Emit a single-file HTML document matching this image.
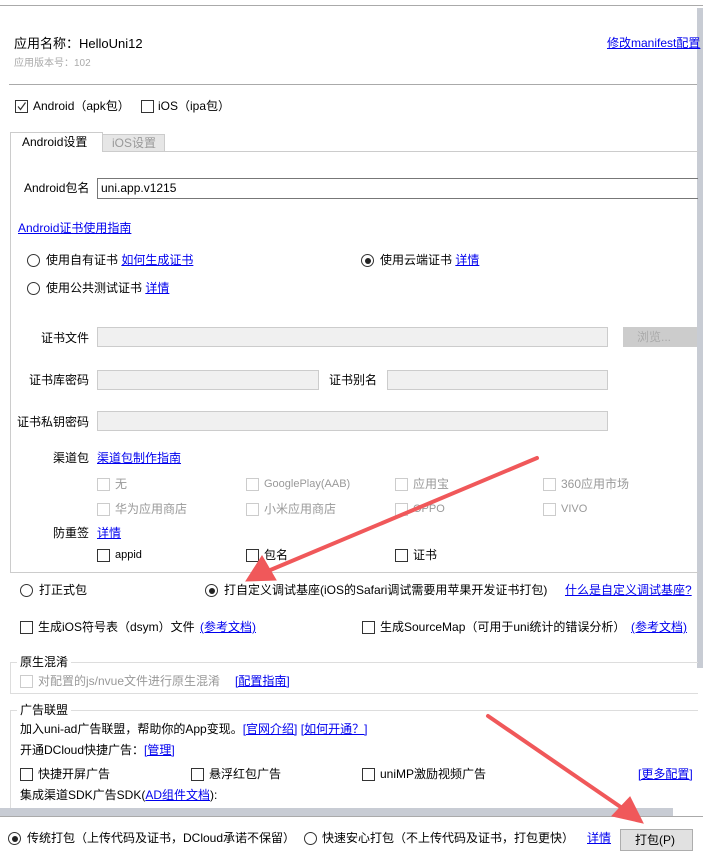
<!DOCTYPE html>
<html><head><meta charset="utf-8"><style>
body{margin:0;width:703px;height:860px;background:#fff;position:relative;overflow:hidden;font-family:"Liberation Sans","Noto Sans CJK SC",sans-serif;font-size:12px;color:#000}
.a{position:absolute;white-space:nowrap;line-height:14px}
.l{color:#0000ee;text-decoration:underline}
.g{color:#999}
.cb{position:absolute;width:11px;height:11px;border:1px solid #333;background:#fff}
.cb.d{border-color:#ccc}
.rd{position:absolute;width:11px;height:11px;border:1px solid #333;border-radius:50%;background:#fff}
.rd.on:after{content:"";position:absolute;left:2.5px;top:2.5px;width:6px;height:6px;border-radius:50%;background:#222}
.in{position:absolute;height:18px;border:1px solid #ccc;background:#f0f0f0}
.lab{position:absolute;text-align:right;width:80px;white-space:nowrap;line-height:14px}
</style></head><body>
<div style="position:absolute;left:0;top:5px;width:703px;height:1px;background:#aaa"></div>
<div style="position:absolute;left:697px;top:8px;width:6px;height:660px;background:#c8ccd4"></div>
<div class="a" style="left:14px;top:37px;font-size:13px">应用名称：HelloUni12</div>
<div class="a g" style="left:14px;top:57px;font-size:10px;color:#aaa">应用版本号：102</div>
<div class="a l" style="left:607px;top:36px">修改manifest配置</div>
<div style="position:absolute;left:9px;top:84px;width:688px;height:1px;background:#aaa"></div>
<div class="cb" style="left:15px;top:100px"></div>
<svg style="position:absolute;left:16px;top:101px" width="11" height="11"><path d="M2 5.5 L4.5 8.5 L9.5 1.5" stroke="#333" stroke-width="1.2" fill="none"/></svg>
<div class="a" style="left:33px;top:99px">Android（apk包）</div>
<div class="cb" style="left:141px;top:100px"></div>
<div class="a" style="left:158px;top:99px">iOS（ipa包）</div>
<div style="position:absolute;left:102px;top:134px;width:61px;height:17px;background:#e6e6e6;border:1px solid #ccc;border-bottom:none"></div>
<div class="a g" style="left:112px;top:136px">iOS设置</div>
<div style="position:absolute;left:10px;top:132px;width:91px;height:19px;border:1px solid #ccc;border-bottom:none;background:#fff;z-index:2"></div>
<div class="a" style="left:22px;top:135px;z-index:3">Android设置</div>
<div style="position:absolute;left:10px;top:151px;width:687px;height:420px;border-left:1px solid #ccc;border-top:1px solid #ccc;border-bottom:1px solid #ccc"></div>
<div class="a" style="left:24px;top:181px">Android包名</div>
<div style="position:absolute;left:97px;top:178px;width:600px;height:19px;border:1px solid #777;border-right:none"></div>
<div class="a" style="left:101px;top:181px">uni.app.v1215</div>
<div class="a l" style="left:18px;top:221px">Android证书使用指南</div>
<div class="rd" style="left:27px;top:254px"></div><div class="a" style="left:46px;top:253px">使用自有证书 <span class="l">如何生成证书</span></div>
<div class="rd on" style="left:361px;top:254px"></div><div class="a" style="left:380px;top:253px">使用云端证书 <span class="l">详情</span></div>
<div class="rd" style="left:27px;top:282px"></div><div class="a" style="left:46px;top:281px">使用公共测试证书 <span class="l">详情</span></div>
<div class="lab" style="left:9px;top:331px">证书文件</div>
<div class="in" style="left:97px;top:327px;width:509px"></div>
<div style="position:absolute;left:623px;top:327px;width:74px;height:20px;background:#ccc"></div>
<div class="a" style="left:637px;top:330px;color:#aaa">浏览...</div>
<div class="lab" style="left:9px;top:373px">证书库密码</div>
<div class="in" style="left:97px;top:370px;width:220px"></div>
<div class="a" style="left:329px;top:373px">证书别名</div>
<div class="in" style="left:387px;top:370px;width:219px"></div>
<div class="lab" style="left:9px;top:415px">证书私钥密码</div>
<div class="in" style="left:97px;top:411px;width:509px"></div>
<div class="lab" style="left:9px;top:451px">渠道包</div><div class="a l" style="left:97px;top:451px">渠道包制作指南</div>
<div class="cb d" style="left:97px;top:478px"></div><div class="a g" style="left:115px;top:477px">无</div>
<div class="cb d" style="left:246px;top:478px"></div><div class="a g" style="left:264px;top:477px;font-size:11px">GooglePlay(AAB)</div>
<div class="cb d" style="left:395px;top:478px"></div><div class="a g" style="left:413px;top:477px">应用宝</div>
<div class="cb d" style="left:543px;top:478px"></div><div class="a g" style="left:561px;top:477px">360应用市场</div>
<div class="cb d" style="left:97px;top:503px"></div><div class="a g" style="left:115px;top:502px">华为应用商店</div>
<div class="cb d" style="left:246px;top:503px"></div><div class="a g" style="left:264px;top:502px">小米应用商店</div>
<div class="cb d" style="left:395px;top:503px"></div><div class="a g" style="left:413px;top:502px;font-size:11px">OPPO</div>
<div class="cb d" style="left:543px;top:503px"></div><div class="a g" style="left:561px;top:502px;font-size:11px">VIVO</div>
<div class="lab" style="left:9px;top:526px">防重签</div><div class="a l" style="left:97px;top:526px">详情</div>
<div class="cb" style="left:97px;top:549px"></div><div class="a" style="left:115px;top:548px;font-size:11px">appid</div>
<div class="cb" style="left:246px;top:549px"></div><div class="a" style="left:264px;top:548px">包名</div>
<div class="cb" style="left:395px;top:549px"></div><div class="a" style="left:413px;top:548px">证书</div>
<div class="rd" style="left:20px;top:584px"></div><div class="a" style="left:39px;top:583px">打正式包</div>
<div class="rd on" style="left:205px;top:584px"></div><div class="a" style="left:224px;top:583px">打自定义调试基座(iOS的Safari调试需要用苹果开发证书打包)</div>
<div class="a l" style="left:565px;top:583px">什么是自定义调试基座?</div>
<div class="cb" style="left:20px;top:621px"></div><div class="a" style="left:38px;top:620px">生成iOS符号表（dsym）文件</div><div class="a l" style="left:200px;top:620px">(参考文档)</div>
<div class="cb" style="left:362px;top:621px"></div><div class="a" style="left:380px;top:620px">生成SourceMap（可用于uni统计的错误分析）</div><div class="a l" style="left:631px;top:620px">(参考文档)</div>
<div style="position:absolute;left:10px;top:662px;width:687px;height:30px;border:1px solid #ddd;border-right:none"></div>
<div class="a" style="left:17px;top:655px;background:#fff;padding:0 3px">原生混淆</div>
<div class="cb d" style="left:20px;top:675px"></div><div class="a g" style="left:38px;top:674px">对配置的js/nvue文件进行原生混淆</div><div class="a l" style="left:235px;top:674px">[配置指南]</div>
<div style="position:absolute;left:10px;top:710px;width:687px;height:100px;border-left:1px solid #ddd;border-top:1px solid #ddd"></div>
<div class="a" style="left:17px;top:703px;background:#fff;padding:0 3px">广告联盟</div>
<div class="a" style="left:20px;top:722px">加入uni-ad广告联盟，帮助你的App变现。<span class="l">[官网介绍]</span> <span class="l">[如何开通？]</span></div>
<div class="a" style="left:20px;top:743px">开通DCloud快捷广告：<span class="l">[管理]</span></div>
<div class="cb" style="left:20px;top:768px"></div><div class="a" style="left:38px;top:767px">快捷开屏广告</div>
<div class="cb" style="left:191px;top:768px"></div><div class="a" style="left:209px;top:767px">悬浮红包广告</div>
<div class="cb" style="left:362px;top:768px"></div><div class="a" style="left:380px;top:767px">uniMP激励视频广告</div>
<div class="a l" style="left:638px;top:767px">[更多配置]</div>
<div class="a" style="left:20px;top:788px">集成渠道SDK广告SDK(<span class="l">AD组件文档</span>):</div>
<div style="position:absolute;left:0;top:808px;width:673px;height:8px;background:#c8ccd4"></div>
<div style="position:absolute;left:0;top:816px;width:703px;height:1px;background:#aaa"></div>
<div class="rd on" style="left:8px;top:832px"></div><div class="a" style="left:27px;top:831px">传统打包（上传代码及证书，DCloud承诺不保留）</div>
<div class="rd" style="left:304px;top:832px"></div><div class="a" style="left:322px;top:831px">快速安心打包（不上传代码及证书，打包更快）</div>
<div class="a l" style="left:587px;top:831px">详情</div>
<div style="position:absolute;left:620px;top:829px;width:71px;height:20px;background:#e1e1e1;border:1px solid #adadad"></div>
<div class="a" style="left:635px;top:833px">打包(P)</div>
<svg style="position:absolute;left:0;top:0" width="703" height="860">
<g fill="#f0585a" stroke="#f0585a" stroke-linecap="round">
<line x1="537" y1="458" x2="268" y2="571" stroke-width="4"/>
<polygon points="246,581 262,556 276,580" />
<line x1="488" y1="716" x2="625" y2="810" stroke-width="4"/>
<polygon points="643,823 612,816 630,797"/>
</g></svg>
</body></html>
